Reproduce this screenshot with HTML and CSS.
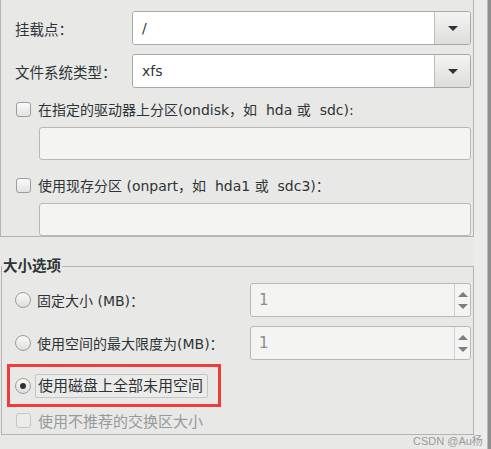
FILE: index.html
```html
<!DOCTYPE html>
<html lang="zh-CN">
<head>
    <meta charset="UTF-8">
    <meta name="viewport" content="width=device-width, initial-scale=1.0">
    <title>分区选项</title>
    <link rel="stylesheet" href="styles.css">
</head>
<body>
    <div class="window">
        <div class="panel">
            <div class="frame-top">
                <div class="form-row">
                    <span class="label">挂载点：</span>
                    <div class="combo">
                        <span class="combo-entry">/</span>
                        <span class="combo-button"><span class="arrow-down"></span></span>
                    </div>
                </div>
                <div class="form-row">
                    <span class="label">文件系统类型：</span>
                    <div class="combo">
                        <span class="combo-entry">xfs</span>
                        <span class="combo-button"><span class="arrow-down"></span></span>
                    </div>
                </div>
                <div class="check-row">
                    <span class="check"></span>
                    <span>在指定的驱动器上分区(ondisk，如&nbsp; hda 或&nbsp; sdc):</span>
                </div>
                <div class="entry disabled"></div>
                <div class="check-row">
                    <span class="check"></span>
                    <span>使用现存分区 (onpart，如&nbsp; hda1 或&nbsp; sdc3)：</span>
                </div>
                <div class="entry disabled"></div>
            </div>

            <fieldset class="size-options">
                <legend>大小选项</legend>
                <div class="radio-row">
                    <span class="radio"></span>
                    <span class="radio-label">固定大小 (MB)：</span>
                    <div class="spin">
                        <span class="spin-value">1</span>
                        <span class="spin-buttons">
                            <span class="arrow-up"></span>
                            <span class="arrow-down light"></span>
                        </span>
                    </div>
                </div>
                <div class="radio-row">
                    <span class="radio"></span>
                    <span class="radio-label">使用空间的最大限度为(MB)：</span>
                    <div class="spin">
                        <span class="spin-value">1</span>
                        <span class="spin-buttons">
                            <span class="arrow-up"></span>
                            <span class="arrow-down light"></span>
                        </span>
                    </div>
                </div>
                <div class="radio-row selected">
                    <span class="radio checked"></span>
                    <span class="focus-label">使用磁盘上全部未用空间</span>
                    <span class="highlight"></span>
                </div>
                <div class="check-row inactive">
                    <span class="check"></span>
                    <span>使用不推荐的交换区大小</span>
                </div>
            </fieldset>
        </div>
        <div class="gutter"></div>
    </div>
    <span class="watermark">CSDN @Au杨</span>
</body>
</html>
```

FILE: styles.css
```css
* {
    margin: 0;
    padding: 0;
    box-sizing: border-box;
}

body {
    width: 491px;
    height: 449px;
    overflow: hidden;
    position: relative;
    background-color: #e8e8e7;
    color: #2e3436;
    font-family: "DejaVu Sans", "Noto Sans CJK SC", sans-serif;
    font-size: 14.5px;
}

.window {
    display: flex;
    height: 100%;
}

.panel {
    width: 474px;
    display: flex;
    flex-direction: column;
}

.gutter {
    flex: 1;
    background-color: #ececeb;
    border-right: 3px solid #8f8f8f;
    box-shadow: inset -1px 0 0 #b9b9b7;
}

.frame-top {
    height: 237px;
    border: 1px solid #b4b4b1;
    border-top: none;
    padding: 11px 2px 0 14px;
    display: flex;
    flex-direction: column;
}

.form-row {
    display: flex;
    align-items: center;
    height: 34px;
    margin-bottom: 9px;
}

.label {
    width: 117px;
}

.combo {
    flex: 1;
    display: flex;
    height: 34px;
    border: 1px solid #a8a8a5;
    border-radius: 3px;
    overflow: hidden;
}

.combo-entry {
    flex: 1;
    background-color: #fff;
    padding-left: 9px;
    display: flex;
    align-items: center;
    font-size: 14px;
}

.combo-button {
    width: 36px;
    border-left: 1px solid #bcbcb9;
    background: linear-gradient(#f4f4f3, #dddddb);
    display: flex;
    align-items: center;
    justify-content: center;
}

.arrow-down {
    width: 0;
    height: 0;
    border-left: 5px solid transparent;
    border-right: 5px solid transparent;
    border-top: 5px solid #2e3436;
}

.arrow-up {
    width: 0;
    height: 0;
    border-left: 5px solid transparent;
    border-right: 5px solid transparent;
    border-bottom: 5px solid #7b7e80;
}

.arrow-down.light {
    border-top-color: #7b7e80;
}

.check-row {
    display: flex;
    align-items: center;
    gap: 7px;
    height: 16px;
    margin: 4px 0 10px 1px;
    font-size: 14px;
}

.check {
    width: 15px;
    height: 15px;
    border: 1px solid #9d9d9b;
    border-radius: 3px;
    background: linear-gradient(#fafafa, #e2e2e1);
}

.entry {
    height: 34px;
    margin: 0 0 13px 24px;
    border: 1px solid #b8b8b5;
    border-radius: 3px;
}

.entry.disabled {
    background-color: #f4f4f3;
}

.entry:last-child {
    margin-bottom: 0;
}

.size-options {
    margin: 21px 0 0 1px;
    width: 473px;
    height: 177px;
    border: 1px solid #b4b4b1;
    padding: 9px 2px 0 13px;
}

.size-options legend {
    font-weight: bold;
    padding: 0 1px;
    margin-left: -13px;
    line-height: 16px;
}

.radio-row {
    display: flex;
    align-items: center;
    height: 34px;
    margin-bottom: 9px;
    position: relative;
}

.radio {
    width: 16px;
    height: 16px;
    border: 1px solid #9d9d9b;
    border-radius: 50%;
    background: linear-gradient(#fafafa, #dededd);
    display: flex;
    align-items: center;
    justify-content: center;
}

.radio.checked::after {
    content: "";
    width: 6px;
    height: 6px;
    border-radius: 50%;
    background-color: #2e3436;
}

.radio-label {
    width: 219px;
    padding-left: 6px;
    font-size: 14px;
}

.spin {
    flex: 1;
    display: flex;
    height: 34px;
    border: 1px solid #b8b8b5;
    border-radius: 3px;
    background-color: #f4f4f3;
    color: #8b8e8f;
}

.spin-value {
    flex: 1;
    padding-left: 8px;
    display: flex;
    align-items: center;
    font-size: 15px;
}

.spin-buttons {
    width: 16px;
    border-left: 1px solid #d0d0ce;
    display: flex;
    flex-direction: column;
    align-items: center;
    justify-content: space-around;
    padding: 4px 0;
}

.radio-row.selected {
    height: 24px;
    margin: 14px 0 14px;
}

.focus-label {
    margin-left: 4px;
    padding: 0 4px 0 2px;
    height: 24px;
    line-height: 22px;
    border: 1px solid #c6c6c4;
    border-radius: 2px;
    font-size: 15px;
    background-color: #ebebea;
}

.highlight {
    position: absolute;
    left: -8px;
    top: -10px;
    width: 214px;
    height: 43px;
    border: 3px solid #f13a3a;
}

.check-row.inactive {
    margin: 0 0 0 1px;
    color: #979a9b;
    font-size: 15px;
}

.check-row.inactive .check {
    border-color: #c6c6c4;
    background: #ececeb;
}

.watermark {
    position: absolute;
    left: 413px;
    top: 432px;
    white-space: nowrap;
    font-family: "Liberation Sans", "Noto Sans CJK SC", sans-serif;
    font-size: 11px;
    color: #9b9b9b;
}
```
